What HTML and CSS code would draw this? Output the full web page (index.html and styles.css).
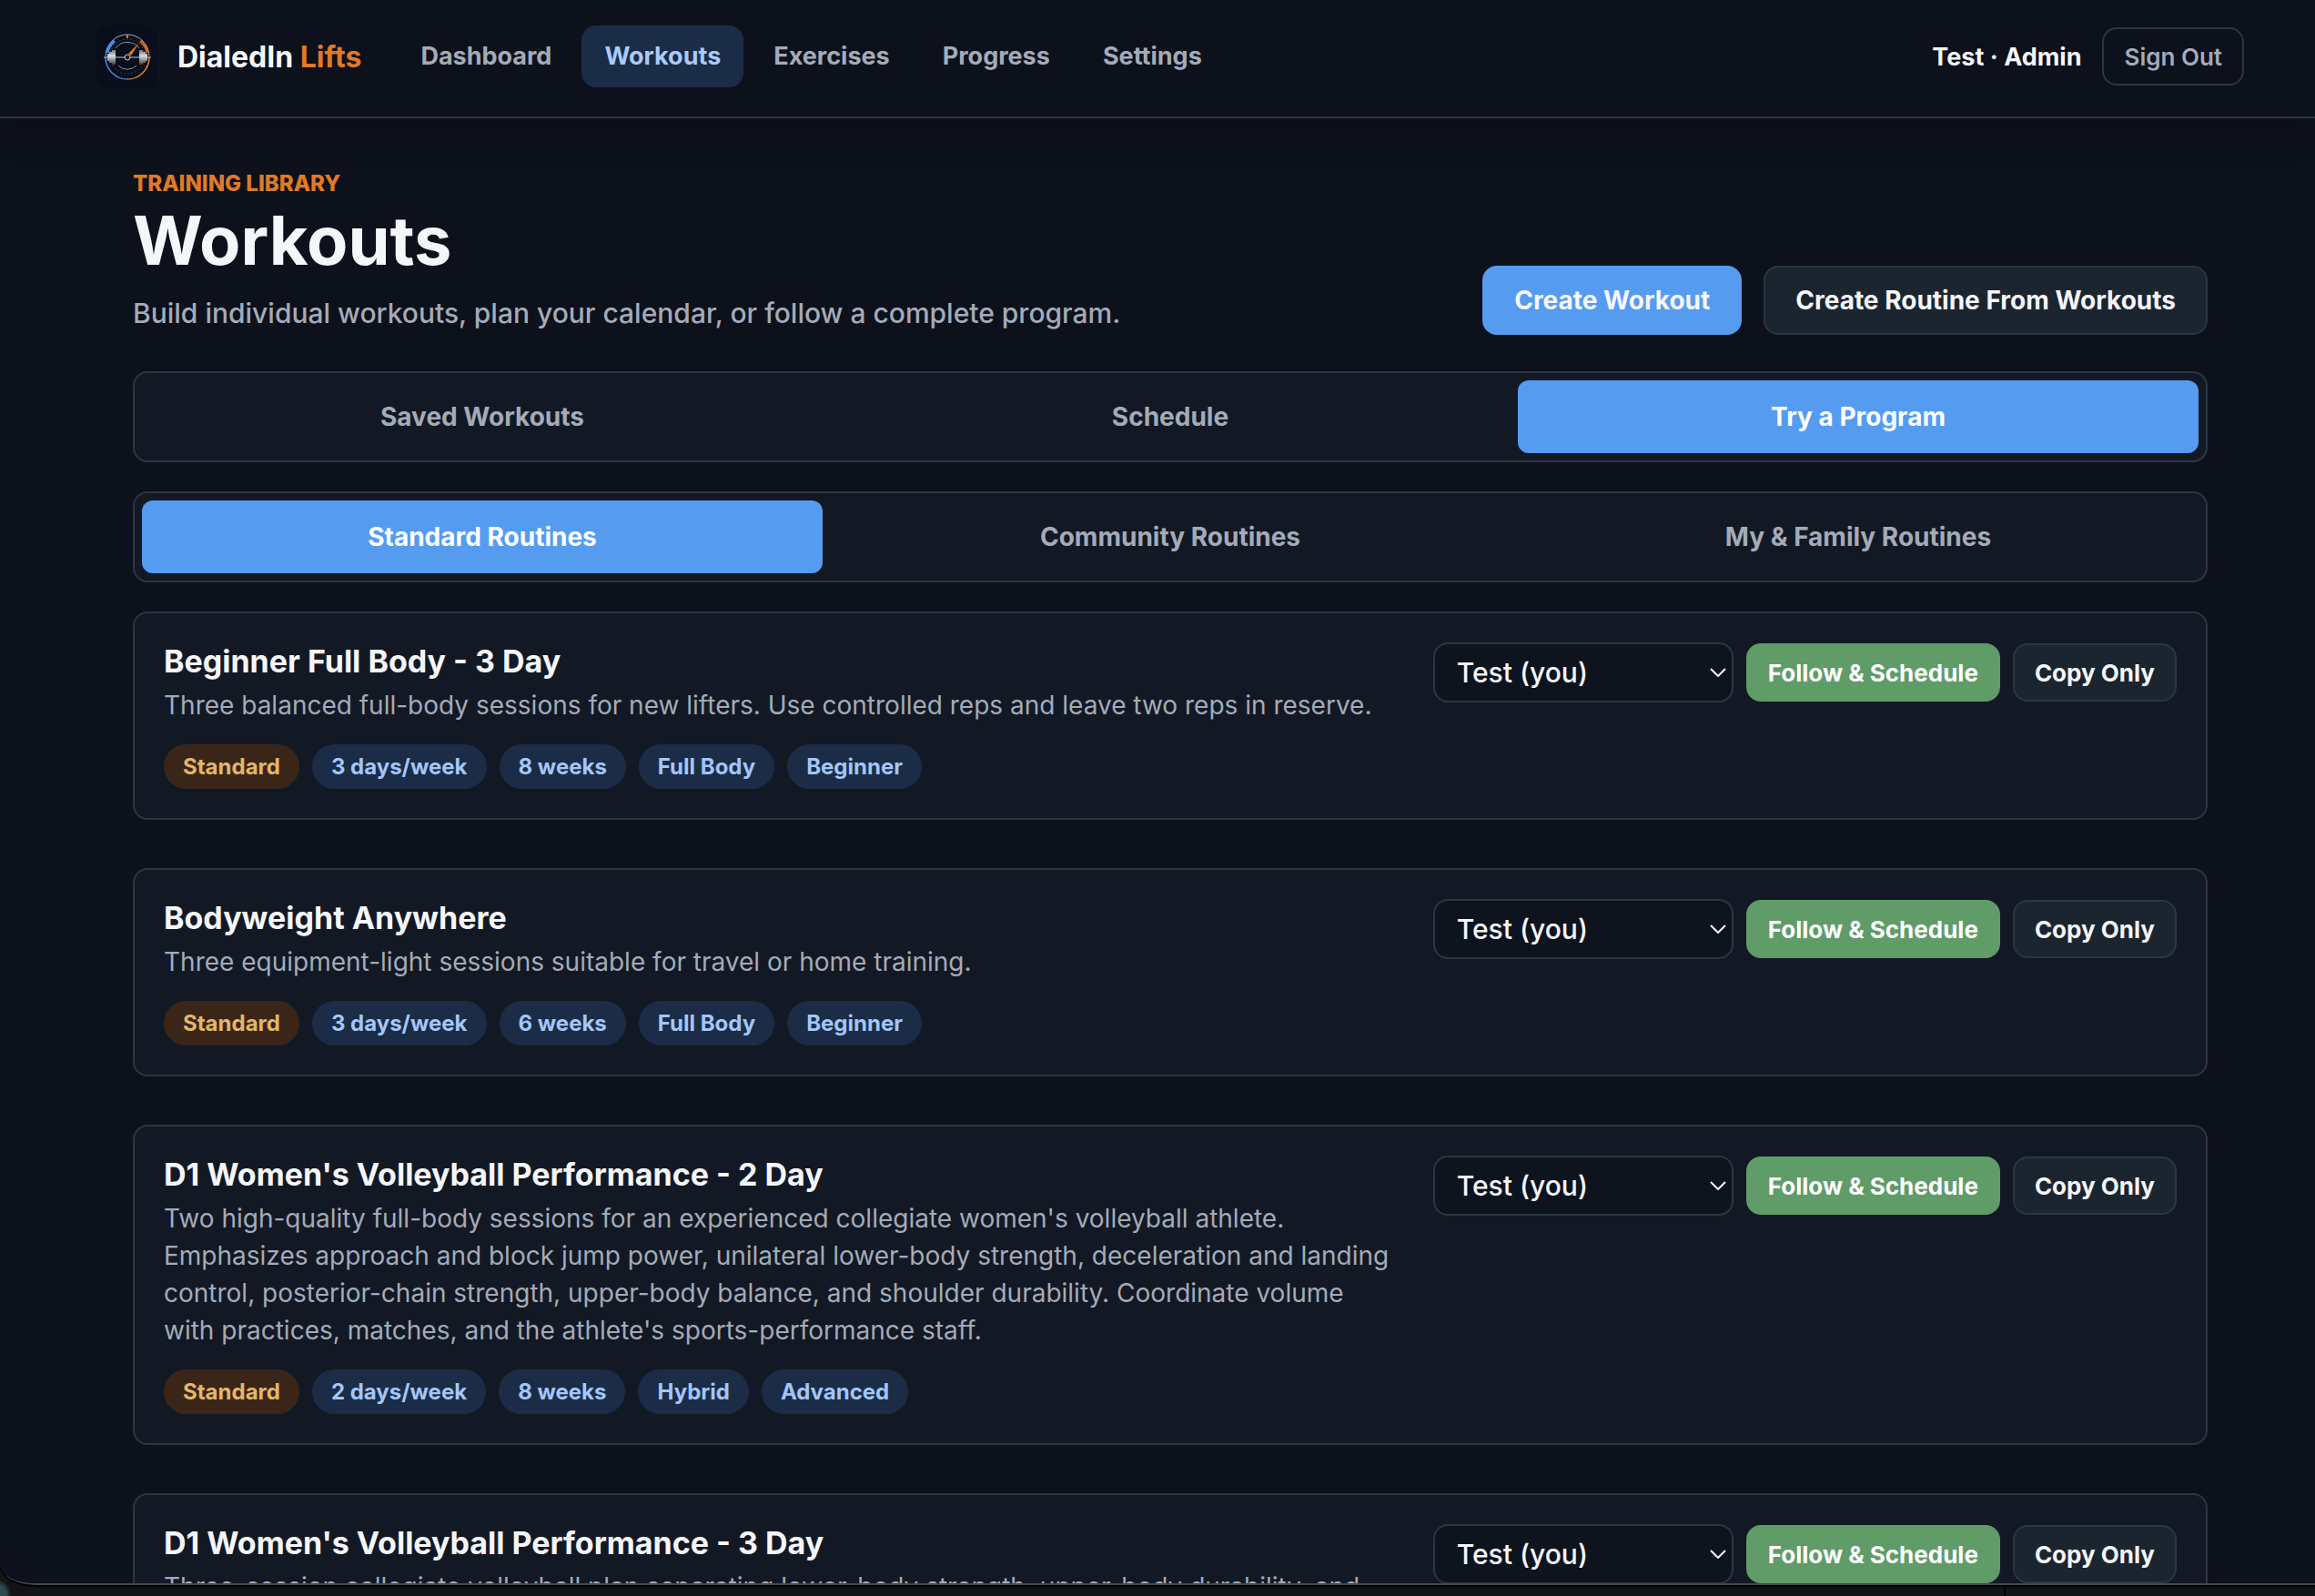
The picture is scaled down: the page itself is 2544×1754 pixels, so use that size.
FILE: index.html
```html
<!DOCTYPE html>
<html lang="en">
<head>
<meta charset="utf-8">
<title>Workouts - DialedIn Lifts</title>
<meta name="viewport" content="width=device-width, initial-scale=1">
<link rel="stylesheet" href="styles.css">
</head>
<body>
<div class="window">
  <header class="topbar">
    <a class="brand" href="#">
      <svg class="brand-mark" viewBox="0 0 68 68" aria-hidden="true">
        <defs>
          <linearGradient id="rim" x1="0" x2="1" y1="0" y2="0">
            <stop offset="0" stop-color="#3f8df0"/>
            <stop offset=".45" stop-color="#4a78b8"/>
            <stop offset=".6" stop-color="#b8702f"/>
            <stop offset="1" stop-color="#f08a24"/>
          </linearGradient>
          <linearGradient id="steel" x1="0" x2="0" y1="0" y2="1">
            <stop offset="0" stop-color="#6f7276"/>
            <stop offset=".4" stop-color="#dcdddf"/>
            <stop offset="1" stop-color="#3c3e42"/>
          </linearGradient>
        </defs>
        <rect width="68" height="68" rx="16" fill="#080e1b"/>
        <path d="M10 34a24 24 0 0 1 48 0" fill="none" stroke="#a9acb1" stroke-width="1"/>
        <path d="M10 35a24 24 0 0 0 48 0" fill="none" stroke="url(#rim)" stroke-width="1.5"/>
        <path d="M12 30a22 22 0 0 1 8-13" fill="none" stroke="#3f8df0" stroke-width="3"/>
        <path d="M48 17a22 22 0 0 1 8 13" fill="none" stroke="#d9601f" stroke-width="3"/>
        <circle cx="34" cy="34" r="19" fill="none" stroke="#75787e" stroke-width="1" stroke-dasharray="1 3"/>
        <path d="M21 25a16 16 0 0 1 26 0M24 44a14 14 0 0 0 20 0" fill="none" stroke="#8d9095" stroke-width="1"/>
        <path d="M34 10v4" stroke="#d9772b" stroke-width="2"/>
        <path d="M8 35h52" stroke="#c9cbce" stroke-width="1"/>
        <path d="M12 31h2v8h-2zM14 29h3v12h-3zM17 27h4v16h-4zM47 27h4v16h-4zM51 29h3v12h-3zM54 31h2v8h-2z" fill="url(#steel)"/>
        <path d="M35 31l12-12-9 14z" fill="#f07a24"/>
        <circle cx="34" cy="35" r="3" fill="#0a101d" stroke="#c9cbce" stroke-width="1"/>
      </svg>
      <span class="brand-name">DialedIn <span class="brand-accent">Lifts</span></span>
    </a>
    <nav class="nav" aria-label="Main">
      <a class="nav-link" href="#">Dashboard</a>
      <a class="nav-link is-active" href="#" aria-current="page">Workouts</a>
      <a class="nav-link" href="#">Exercises</a>
      <a class="nav-link" href="#">Progress</a>
      <a class="nav-link" href="#">Settings</a>
    </nav>
    <div class="account">
      <span class="account-name">Test · Admin</span>
      <button class="btn btn-ghost" type="button">Sign Out</button>
    </div>
  </header>

  <main class="page">
    <section class="page-head">
      <div>
        <p class="eyebrow">TRAINING LIBRARY</p>
        <h1 class="page-title">Workouts</h1>
        <p class="page-sub">Build individual workouts, plan your calendar, or follow a complete program.</p>
      </div>
      <div class="page-actions">
        <button class="btn btn-large btn-primary" type="button">Create Workout</button>
        <button class="btn btn-large btn-secondary" type="button">Create Routine From Workouts</button>
      </div>
    </section>

    <div class="tabs" role="tablist" aria-label="Workout views">
      <button class="tab" type="button" role="tab" aria-selected="false">Saved Workouts</button>
      <button class="tab" type="button" role="tab" aria-selected="false">Schedule</button>
      <button class="tab is-active" type="button" role="tab" aria-selected="true">Try a Program</button>
    </div>

    <div class="tabs" role="tablist" aria-label="Routine sources">
      <button class="tab is-active" type="button" role="tab" aria-selected="true">Standard Routines</button>
      <button class="tab" type="button" role="tab" aria-selected="false">Community Routines</button>
      <button class="tab" type="button" role="tab" aria-selected="false">My &amp; Family Routines</button>
    </div>

    <div class="routines">
      <article class="card">
        <div class="card-body">
          <h2 class="card-title">Beginner Full Body - 3 Day</h2>
          <p class="card-text">Three balanced full-body sessions for new lifters. Use controlled reps and leave two reps in reserve.</p>
          <ul class="chips">
            <li class="chip chip-standard">Standard</li>
            <li class="chip">3 days/week</li>
            <li class="chip">8 weeks</li>
            <li class="chip">Full Body</li>
            <li class="chip">Beginner</li>
          </ul>
        </div>
        <div class="card-actions">
          <select class="select" aria-label="Follow Beginner Full Body as"><option>Test (you)</option></select>
          <button class="btn btn-follow" type="button">Follow &amp; Schedule</button>
          <button class="btn btn-secondary" type="button">Copy Only</button>
        </div>
      </article>

      <article class="card">
        <div class="card-body">
          <h2 class="card-title">Bodyweight Anywhere</h2>
          <p class="card-text">Three equipment-light sessions suitable for travel or home training.</p>
          <ul class="chips">
            <li class="chip chip-standard">Standard</li>
            <li class="chip">3 days/week</li>
            <li class="chip">6 weeks</li>
            <li class="chip">Full Body</li>
            <li class="chip">Beginner</li>
          </ul>
        </div>
        <div class="card-actions">
          <select class="select" aria-label="Follow Bodyweight Anywhere as"><option>Test (you)</option></select>
          <button class="btn btn-follow" type="button">Follow &amp; Schedule</button>
          <button class="btn btn-secondary" type="button">Copy Only</button>
        </div>
      </article>

      <article class="card">
        <div class="card-body">
          <h2 class="card-title">D1 Women's Volleyball Performance - 2 Day</h2>
          <p class="card-text">Two high-quality full-body sessions for an experienced collegiate women's volleyball athlete. Emphasizes approach and block jump power, unilateral lower-body strength, deceleration and landing control, posterior-chain strength, upper-body balance, and shoulder durability. Coordinate volume with practices, matches, and the athlete's sports-performance staff.</p>
          <ul class="chips">
            <li class="chip chip-standard">Standard</li>
            <li class="chip">2 days/week</li>
            <li class="chip">8 weeks</li>
            <li class="chip">Hybrid</li>
            <li class="chip">Advanced</li>
          </ul>
        </div>
        <div class="card-actions">
          <select class="select" aria-label="Follow Volleyball Performance 2 Day as"><option>Test (you)</option></select>
          <button class="btn btn-follow" type="button">Follow &amp; Schedule</button>
          <button class="btn btn-secondary" type="button">Copy Only</button>
        </div>
      </article>

      <article class="card">
        <div class="card-body">
          <h2 class="card-title">D1 Women's Volleyball Performance - 3 Day</h2>
          <p class="card-text">Three-session collegiate volleyball plan separating lower-body strength, upper-body durability, and</p>
        </div>
        <div class="card-actions">
          <select class="select" aria-label="Follow Volleyball Performance 3 Day as"><option>Test (you)</option></select>
          <button class="btn btn-follow" type="button">Follow &amp; Schedule</button>
          <button class="btn btn-secondary" type="button">Copy Only</button>
        </div>
      </article>
    </div>
  </main>
</div>
</body>
</html>
```
FILE: styles.css
```css
:root {
  --bg: #0d111b;
  --surface: #131924;
  --raised: #1b2530;
  --line: #2a3644;
  --text: #f5f6fa;
  --muted: #a3abb9;
  --blue: #559cf1;
  --blue-soft: #1b2c47;
  --orange: #e07a28;
}

* {
  box-sizing: border-box;
}

body {
  margin: 0;
  height: 100vh;
  padding-bottom: 12px;
  overflow: hidden;
  background:
    radial-gradient(12px 18px at 0 100%, #2c4a4d 60%, transparent),
    linear-gradient(#000, #000) right 340px bottom / 2px 12px no-repeat,
    #121314;
  color: var(--text);
  font-family: Inter, "Liberation Sans", sans-serif;
  font-size: 28px;
}

h1,
h2,
p,
ul {
  margin: 0;
  padding: 0;
}

button,
select {
  font-family: inherit;
}

.window {
  position: relative;
  height: 100%;
  overflow: hidden;
  background: var(--bg);
  border-bottom-left-radius: 40px 22px;
  box-shadow: 0 2px #000;
}

/* light edge of the window frame */
.window::after {
  content: "";
  position: absolute;
  inset: 0 0 0 -2px;
  border-bottom: 2px solid #434853;
  border-left: 2px solid transparent;
  border-bottom-left-radius: 40px 22px;
  pointer-events: none;
}

.topbar {
  display: flex;
  align-items: center;
  padding: 28px 78px 32px 106px;
  border-bottom: 2px solid var(--line);
  box-shadow: 0 12px 36px rgba(0, 0, 0, 0.22);
}

.brand {
  display: flex;
  align-items: center;
  gap: 21px;
  margin-right: 40px;
  color: inherit;
  text-decoration: none;
}

.brand-mark {
  width: 68px;
  height: 68px;
}

.brand-name {
  font-size: 32px;
  font-weight: 700;
}

.brand-accent {
  color: var(--orange);
}

.nav {
  display: flex;
  gap: 8px;
}

.nav-link {
  padding: 0 25px;
  border-radius: 16px;
  color: var(--muted);
  font-size: 27px;
  font-weight: 700;
  line-height: 68px;
  text-decoration: none;
}

.nav-link.is-active {
  background: var(--blue-soft);
  color: #a9cbfa;
}

.account {
  display: flex;
  align-items: center;
  gap: 23px;
  margin-left: auto;
}

.account-name {
  font-size: 27px;
  font-weight: 700;
}

.btn {
  height: 64px;
  padding: 0 22px;
  border: 2px solid transparent;
  border-radius: 16px;
  color: var(--text);
  font-size: 26px;
  font-weight: 700;
  white-space: nowrap;
}

.btn-large {
  height: 76px;
  padding: 0 33px;
  font-size: 28px;
}

.btn-ghost {
  background: transparent;
  border-color: var(--line);
  color: var(--muted);
  font-weight: 600;
}

.btn-primary {
  background: var(--blue);
  border-color: var(--blue);
}

.btn-secondary {
  background: var(--raised);
  border-color: var(--line);
}

.btn-follow {
  background: #5f9c68;
  border-color: #5f9c68;
  color: #fff;
}

.page {
  display: flex;
  flex-direction: column;
  gap: 32px;
  padding: 54px 118px 54px 146px;
}

.page-head {
  display: flex;
  align-items: flex-end;
  justify-content: space-between;
  margin-bottom: 8px;
}

.eyebrow {
  color: var(--orange);
  font-size: 24px;
  font-weight: 800;
  line-height: 36px;
}

.page-title {
  margin: 4px 0 16px;
  font-size: 74px;
  font-weight: 700;
  line-height: 80px;
}

.page-sub {
  color: var(--muted);
  font-size: 30px;
  font-weight: 500;
  line-height: 48px;
}

.page-actions {
  display: flex;
  gap: 24px;
}

.tabs {
  display: grid;
  grid-template-columns: repeat(3, 1fr);
  gap: 8px;
  padding: 8px;
  background: var(--surface);
  border: 2px solid var(--line);
  border-radius: 16px;
}

.tab {
  height: 80px;
  border: 0;
  border-radius: 12px;
  background: transparent;
  color: var(--muted);
  font-size: 28px;
  font-weight: 700;
}

.tab.is-active {
  background: var(--blue);
  color: #fff;
}

.routines {
  display: flex;
  flex-direction: column;
  gap: 53px;
}

.card {
  display: flex;
  align-items: flex-start;
  gap: 40px;
  padding: 32px;
  background: var(--surface);
  border: 2px solid var(--line);
  border-radius: 16px;
}

.card-body {
  flex: 1;
}

.card-title {
  margin-bottom: 8px;
  font-size: 34px;
  font-weight: 700;
  line-height: 41px;
}

.card-text {
  color: var(--muted);
  font-size: 28px;
  line-height: 41px;
}

.chips {
  display: flex;
  flex-wrap: wrap;
  gap: 14px;
  margin-top: 22px;
  list-style: none;
}

.chip {
  padding: 0 21px;
  border-radius: 25px;
  background: var(--blue-soft);
  color: #a3c6f8;
  font-size: 24px;
  font-weight: 700;
  line-height: 49px;
}

.chip-standard {
  background: #3a2618;
  color: #e2b76a;
}

.card-actions {
  display: flex;
  align-items: center;
  gap: 14px;
}

.select {
  width: 330px;
  height: 66px;
  padding: 0 24px;
  border: 2px solid var(--line);
  border-radius: 16px;
  appearance: none;
  background: #0e141d url("data:image/svg+xml,%3Csvg xmlns='http://www.w3.org/2000/svg' viewBox='0 0 18 10'%3E%3Cpath d='M1 1l8 8 8-8' fill='none' stroke='%23f5f6fa' stroke-width='2'/%3E%3C/svg%3E") no-repeat right 6px center / 18px 10px;
  color: var(--text);
  font-size: 30px;
  font-weight: 500;
}
```
